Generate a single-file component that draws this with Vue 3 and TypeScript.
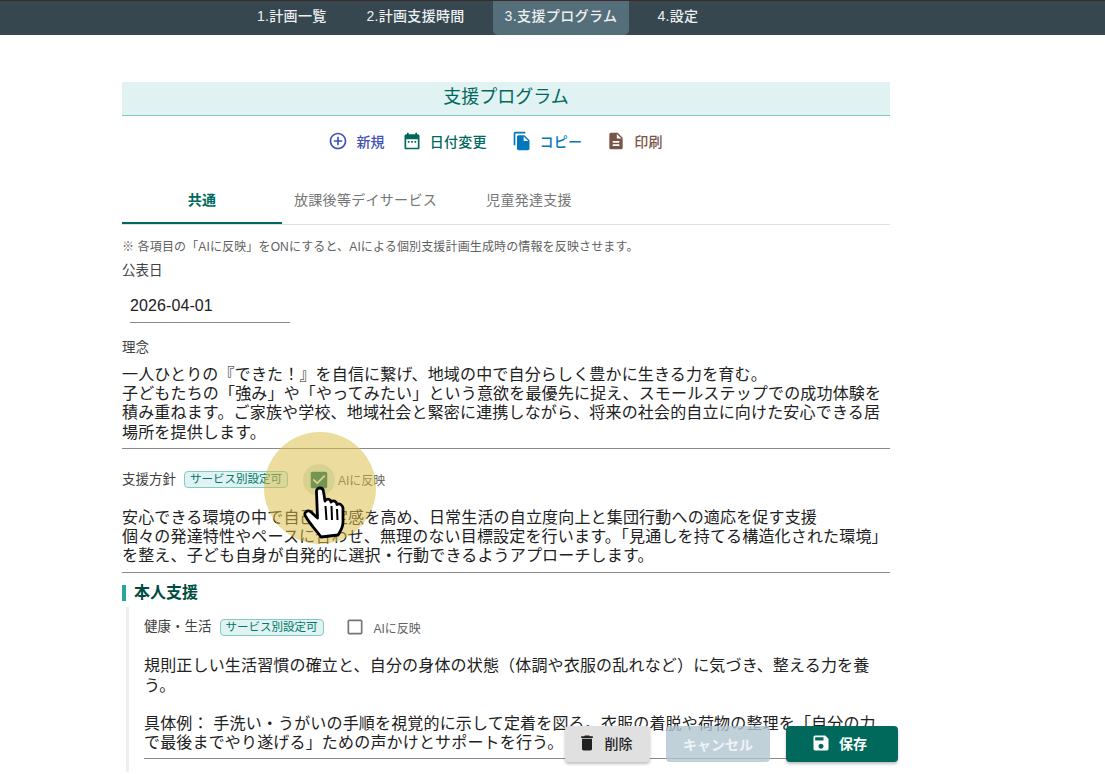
<template>
  <div class="page">
    <nav class="topbar">
      <a v-for="t in navItems" :key="t" class="navitem" :class="{ active: t === '3.支援プログラム' }">{{ t }}</a>
    </nav>

    <main class="content">
      <h1 class="title">支援プログラム</h1>

      <div class="actions">
        <button class="act new">
          <svg viewBox="0 0 24 24"><path d="M13 7h-2v4H7v2h4v4h2v-4h4v-2h-4V7zm-1-5C6.48 2 2 6.48 2 12s4.48 10 10 10 10-4.48 10-10S17.52 2 12 2zm0 18c-4.41 0-8-3.59-8-8s3.59-8 8-8 8 3.59 8 8-3.59 8-8 8z" /></svg>
          新規
        </button>
        <button class="act date">
          <svg viewBox="0 0 24 24"><path d="M19 4h-1V2h-2v2H8V2H6v2H5c-1.11 0-2 .9-2 2v14c0 1.1.89 2 2 2h14c1.1 0 2-.9 2-2V6c0-1.1-.9-2-2-2zm0 16H5V10h14v10zM9 14H7v-2h2v2zm4 0h-2v-2h2v2zm4 0h-2v-2h2v2z" /></svg>
          日付変更
        </button>
        <button class="act copy">
          <svg viewBox="0 0 24 24"><path d="M16 1H4c-1.1 0-2 .9-2 2v14h2V3h12V1zm-1 4 6 6v10c0 1.1-.9 2-2 2H7.99C6.89 23 6 22.1 6 21l.01-14c0-1.1.89-2 1.99-2h7zm-1 7h5.500L14 6.500V12z" /></svg>
          コピー
        </button>
        <button class="act print">
          <svg viewBox="0 0 24 24"><path d="M14 2H6c-1.1 0-1.99.9-1.99 2L4 20c0 1.1.89 2 1.99 2H18c1.1 0 2-.9 2-2V8l-6-6zm2 16H8v-2h8v2zm0-4H8v-2h8v2zm-3-5V3.500L18.500 9H13z" /></svg>
          印刷
        </button>
      </div>

      <div class="tabs">
        <div v-for="(t, i) in tabs" :key="t" class="tab" :class="{ on: i === 0 }">{{ t }}</div>
      </div>

      <p class="note">※ 各項目の「AIに反映」をONにすると、AIによる個別支援計画生成時の情報を反映させます。</p>

      <div class="label first">公表日</div>
      <div class="dateinput">2026-04-01</div>

      <div class="label rinen">理念</div>
      <div class="field rinentext">{{ rinen }}</div>

      <div class="labelrow policy">
        <span class="rowlabel">支援方針</span>
        <span class="chip">サービス別設定可</span>
        <span class="check on">
          <svg viewBox="0 0 24 24"><path d="M19 3H5c-1.11 0-2 .9-2 2v14c0 1.1.89 2 2 2h14c1.11 0 2-.9 2-2V5c0-1.1-.89-2-2-2zm-9 14-5-5 1.41-1.41L10 14.17l7.59-7.59L19 8l-9 9z" /></svg>
        </span>
        <span class="ai">AIに反映</span>
      </div>
      <div class="field policytext">{{ policy }}</div>

      <h2 class="section">本人支援</h2>
      <div class="group">
        <div class="labelrow health">
          <span class="rowlabel">健康・生活</span>
          <span class="chip">サービス別設定可</span>
          <span class="check">
            <svg viewBox="0 0 24 24"><path d="M19 5v14H5V5h14m0-2H5c-1.1 0-2 .9-2 2v14c0 1.1.9 2 2 2h14c1.1 0 2-.9 2-2V5c0-1.1-.9-2-2-2z" /></svg>
          </span>
          <span class="ai">AIに反映</span>
        </div>
        <div class="field healthtext">{{ health }}</div>
      </div>
    </main>

    <!-- 固定ボタン -->
    <button class="fbtn del">
      <svg viewBox="0 0 24 24"><path d="M6 19c0 1.1.9 2 2 2h8c1.1 0 2-.9 2-2V7H6v12zM19 4h-3.500l-1-1h-5l-1 1H5v2h14V4z" /></svg>
      削除
    </button>
    <button class="fbtn cancel">キャンセル</button>
    <button class="fbtn save">
      <svg viewBox="0 0 24 24"><path d="M17 3H5c-1.11 0-2 .9-2 2v14c0 1.1.89 2 2 2h14c1.1 0 2-.9 2-2V7l-4-4zm-5 16c-1.66 0-3-1.34-3-3s1.34-3 3-3 3 1.34 3 3-1.34 3-3 3zm3-10H5V5h10v4z" /></svg>
      保存
    </button>

    <!-- カーソル強調 -->
    <div class="spot"></div>
    <svg class="hand" viewBox="0 0 48 58">
      <path d="M16.500 8C16 3 23 2.500 23.500 7.500L25 17C27 14 30.500 15 31 18C33 16 36.500 17 37 20.500C39 19 42.500 20.500 43 24V38C43 44 40 48 38 51L21 53C16 46 10 40 6 33C3 29 7 25 11 28L17.500 34Z" fill="#fff" stroke="#000" stroke-width="2.800" stroke-linejoin="round" />
      <path d="M25.500 22L26.500 36M31.500 22L32 36M37 25L37.500 36" stroke="#000" stroke-width="2" fill="none" />
    </svg>
  </div>
</template>

<script setup lang="ts">
const navItems: string[] = ['1.計画一覧', '2.計画支援時間', '3.支援プログラム', '4.設定']
const tabs: string[] = ['共通', '放課後等デイサービス', '児童発達支援']

const rinen =
  '一人ひとりの『できた！』を自信に繋げ、地域の中で自分らしく豊かに生きる力を育む。\n' +
  '子どもたちの「強み」や「やってみたい」という意欲を最優先に捉え、スモールステップでの成功体験を積み重ねます。ご家族や学校、地域社会と緊密に連携しながら、将来の社会的自立に向けた安心できる居場所を提供します。'
const policy =
  '安心できる環境の中で自己肯定感を高め、日常生活の自立度向上と集団行動への適応を促す支援\n' +
  '個々の発達特性やペースに合わせ、無理のない目標設定を行います。「見通しを持てる構造化された環境」を整え、子ども自身が自発的に選択・行動できるようアプローチします。'
const health =
  '規則正しい生活習慣の確立と、自分の身体の状態（体調や衣服の乱れなど）に気づき、整える力を養う。\n\n' +
  '具体例： 手洗い・うがいの手順を視覚的に示して定着を図る。衣服の着脱や荷物の整理を「自分の力で最後までやり遂げる」ための声かけとサポートを行う。'
</script>

<style>
html, body {
  margin: 0;
  overflow: hidden;
}
</style>

<style scoped>
.page {
  position: relative;
  width: 1105px;
  height: 774px;
  overflow: hidden;
  background: #fff;
  font-family: "Liberation Sans", "Noto Sans CJK JP", sans-serif;
  color: #212121;
}

.topbar {
  height: 35px;
  box-sizing: border-box;
  background: #37474f;
  border-top: 1px solid #3d2b2b;
  display: flex;
  padding-left: 241px;
}

.navitem {
  padding: 0 16px;
  margin-right: 8px;
  line-height: 30px;
  font-size: 14px;
  font-weight: 500;
  color: #eceff1;
  letter-spacing: 0.3px;
  white-space: nowrap;
}

.navitem:nth-child(2) { margin-right: 12px; }

.navitem.active {
  background: #546e7a;
  border-radius: 0 0 5px 5px;
  padding: 0 12px;
  margin-right: 12px;
  letter-spacing: 0.4px;
}

.content {
  width: 768px;
  margin-left: 122px;
  padding-top: 47px;
}

.title {
  margin: 0;
  height: 33px;
  background: #e0f2f1;
  border-bottom: 1px solid #80cbc4;
  font-size: 18px;
  font-weight: 400;
  line-height: 30px;
  text-align: center;
  color: #00695c;
}

.actions {
  display: flex;
  justify-content: center;
  gap: 17px;
  margin-top: 12px;
  padding-right: 21px;
  height: 26px;
}

.act {
  border: 0;
  background: none;
  padding: 0;
  display: flex;
  align-items: center;
  gap: 8px;
  font: 500 14px "Liberation Sans", "Noto Sans CJK JP", sans-serif;
  letter-spacing: 0.2px;
}

.act svg {
  width: 20px;
  height: 20px;
  fill: currentColor;
}

.new { color: #3f51b5; }
.date { color: #00695c; }
.copy { color: #0277bd; margin-left: 8px; }
.print { color: #795548; margin-left: 7px; }

.tabs {
  display: flex;
  margin-top: 22px;
  border-bottom: 1px solid #e0e0e0;
}

.tab {
  padding: 0 12px;
  min-width: 160px;
  box-sizing: border-box;
  text-align: center;
  height: 48px;
  line-height: 48px;
  font-size: 14px;
  color: #757575;
  letter-spacing: 0.3px;
}

.tab.on {
  color: #00695c;
  font-weight: 700;
  border-bottom: 2px solid #00695c;
}

.note {
  margin: 14px 0 0;
  font-size: 12px;
  line-height: 16px;
  color: #616161;
  letter-spacing: 0.14px;
}

.label {
  font-size: 13.500px;
  line-height: 18px;
  color: #424242;
}

.label.first { margin-top: 7px; }

.dateinput {
  width: 160px;
  margin: 15px 0 0 8px;
  height: 28px;
  box-sizing: border-box;
  border-bottom: 1px solid #8a8a8a;
  font-size: 16px;
  line-height: 22px;
  letter-spacing: 0.1px;
  color: #212121;
}

.label.rinen { margin-top: 16px; }

.field {
  white-space: pre-wrap;
  font-size: 16px;
  line-height: 19.200px;
  letter-spacing: 0.17px;
  color: #212121;
  border-bottom: 1px solid #8a8a8a;
  margin-top: 8px;
  padding-bottom: 7px;
}

.rinentext {
  padding-bottom: 6px;
}

.labelrow {
  display: flex;
  align-items: center;
}

.policy {
  margin-top: 18px;
  height: 26px;
}

.rowlabel {
  font-size: 13.500px;
  color: #424242;
  position: relative;
  top: -2px;
}

.chip {
  margin-left: 8px;
  height: 15px;
  line-height: 14px;
  padding: 0 5px;
  border: 1px solid #80cbc4;
  border-radius: 4px;
  background: #e0f2f1;
  color: #00796b;
  font-size: 11.500px;
}

.check {
  position: relative;
  width: 22px;
  height: 22px;
  margin-left: 20px;
  display: flex;
}

.check svg {
  position: relative;
  width: 100%;
  height: 100%;
  fill: #757575;
}

.check.on svg { fill: #00695c; }

/* hover ripple */
.check.on::before {
  content: "";
  position: absolute;
  left: -5px;
  top: -5px;
  width: 32px;
  height: 32px;
  border-radius: 50%;
  background: rgba(0, 105, 92, 0.16);
}

.ai {
  margin-left: 8px;
  font-size: 12px;
  color: #616161;
}

.policytext {
  margin-top: 15px;
}

.section {
  margin: 12px 0 0;
  border-left: 4px solid #26a69a;
  padding-left: 8px;
  font-size: 16px;
  line-height: 16px;
  font-weight: 700;
  color: #004d40;
}

.group {
  margin-top: 6px;
  margin-left: 4px;
  border-left: 3px solid #eeeeee;
  padding: 6px 0 0 15px;
  height: 159px;
}

.health {
  height: 28px;
}

.health .check {
  width: 20px;
  height: 20px;
  margin-left: 21px;
}

.health .ai {
  margin-left: 9px;
}

.healthtext {
  margin-top: 15px;
  padding-bottom: 6px;
}

.fbtn {
  position: absolute;
  top: 726px;
  height: 36px;
  box-sizing: border-box;
  border: 0;
  border-radius: 4px;
  display: flex;
  align-items: center;
  justify-content: center;
  gap: 8px;
  font: 700 14px "Liberation Sans", "Noto Sans CJK JP", sans-serif;
  box-shadow: 0 2px 3px rgba(0, 0, 0, 0.25);
}

.fbtn svg {
  width: 20px;
  height: 20px;
  fill: currentColor;
}

.del {
  left: 565px;
  width: 85px;
  padding: 0 6px 2px 0;
  background: #e0e0e0;
  color: #212121;
  font-weight: 500;
}

.cancel {
  left: 666px;
  width: 104px;
  padding-bottom: 2px;
  background: rgba(176, 197, 209, 0.8);
  color: #eef3f5;
  box-shadow: none;
}

.save {
  left: 786px;
  width: 112px;
  padding: 0 6px 2px 0;
  background: #00695c;
  color: #fff;
}

.spot {
  position: absolute;
  left: 264px;
  top: 432px;
  width: 112px;
  height: 112px;
  border-radius: 50%;
  background: rgba(219, 189, 72, 0.53);
  pointer-events: none;
}

.hand {
  position: absolute;
  left: 300px;
  top: 484px;
  width: 48px;
  height: 58px;
}
</style>
